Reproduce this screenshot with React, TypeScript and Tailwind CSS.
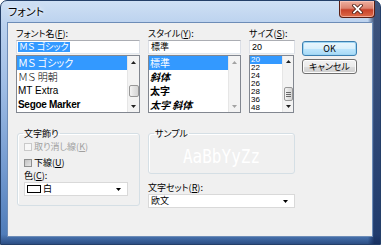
import React from "react";

const jp = "font-['Noto_Sans_CJK_JP',sans-serif] [font-feature-settings:'palt']";

function Tri({ up, color = "#000" }: { up?: boolean; color?: string }) {
  return (
    <svg width="5" height="3" viewBox="0 0 5 3">
      <path d={up ? "M0 3H5L2.5 0Z" : "M0 0H5L2.5 3Z"} fill={color} />
    </svg>
  );
}

interface ScrollProps {
  widthClass: string;
  thumbClass?: string;
  grip?: boolean;
  dim?: boolean;
}

function ScrollBar({ widthClass, thumbClass, grip, dim }: ScrollProps) {
  const arrow = dim ? "#a3a3a3" : "#202020";
  return (
    <div className={`${widthClass} h-full flex flex-col bg-[#f3f3f3] border-l border-[#e6e6e6]`}>
      <div className="h-[12px] flex items-center justify-center">
        <Tri up color={arrow} />
      </div>
      <div className="flex-1 flex flex-col items-center">
        {thumbClass && (
          <div className={`${thumbClass} w-[calc(100%-1px)] rounded-[2px] border border-[#979797] bg-[linear-gradient(90deg,#f4f4f4,#e2e2e2_50%,#d6d6d6)] flex flex-col items-center justify-center gap-[1px]`}>
            {grip && (
              <>
                <div className="w-[5px] h-px bg-[#6a6a6a]" />
                <div className="w-[5px] h-px bg-[#6a6a6a]" />
                <div className="w-[5px] h-px bg-[#6a6a6a]" />
              </>
            )}
          </div>
        )}
      </div>
      <div className="h-[12px] flex items-center justify-center">
        <Tri color={arrow} />
      </div>
    </div>
  );
}

function Label({ text, k }: { text: string; k: string }) {
  return (
    <div className={`${jp} h-[13px] text-[9px] leading-[13px] text-black whitespace-nowrap`}>
      {text}(<u>{k}</u>):
    </div>
  );
}

function TextBox({ children }: { children: React.ReactNode }) {
  return (
    <div className="h-[14px] bg-white border border-[#abadb3] border-b-[#e3e9ef] border-x-[#dbdfe6] flex items-center pl-[1px]">
      {children}
    </div>
  );
}

function Dropdown({ children, widthClass }: { children: React.ReactNode; widthClass: string }) {
  return (
    <div className={`${widthClass} h-[14px] bg-white border border-[#d9d9d9] flex items-center pl-[2px] pr-[6px]`}>
      <div className="flex-1 flex items-center gap-[2px]">{children}</div>
      <Tri />
    </div>
  );
}

function CheckBox({ label, k, disabled }: { label: string; k: string; disabled?: boolean }) {
  return (
    <div className="h-[12px] flex items-center gap-[2px]">
      <div
        className={`w-[8px] h-[8px] border ${
          disabled ? "border-[#c9c9c9] bg-[#f7f7f7]" : "border-[#8e8f8f] bg-[linear-gradient(135deg,#c2c2c2,#e6e6e6)]"
        }`}
      />
      <span className={`${jp} text-[9px] leading-[12px] ${disabled ? "text-[#a0a0a0]" : "text-black"}`}>
        {label}(<u>{k}</u>)
      </span>
    </div>
  );
}

function WinButton({ children, primary }: { children: React.ReactNode; primary?: boolean }) {
  return (
    <div
      className={`${jp} h-[15px] rounded-[3px] border flex items-center justify-center text-[9px] text-black ${
        primary
          ? "border-[#3c7fb1] bg-[linear-gradient(180deg,#eaf6fd_0%,#d9f0fc_50%,#bee6fd_51%,#a7d9f5_100%)] shadow-[inset_0_0_0_1px_#9fd6f3]"
          : "border-[#707070] bg-[linear-gradient(180deg,#f2f2f2_0%,#ebebeb_50%,#dddddd_51%,#cfcfcf_100%)] shadow-[inset_0_0_0_1px_#fcfcfc]"
      }`}
    >
      {children}
    </div>
  );
}

export default function App() {
  return (
    <div className="w-[381px] h-[245px] bg-white">
      <div className="w-full h-full rounded-t-[7px] border border-[#243f68] flex flex-col bg-[linear-gradient(90deg,rgba(12,32,72,0)_0%,rgba(12,32,72,0)_96.8%,rgba(16,38,84,0.75)_98.5%),linear-gradient(180deg,rgba(12,32,72,0)_0%,rgba(12,32,72,0)_96%,rgba(16,38,84,0.5)_100%),linear-gradient(180deg,#cfe0f4_0%,#bad1ee_10%,#9fbde5_35%,#7299cf_70%,#4a78b6_100%)]">
        {/* title bar */}
        <div className="h-[21px] flex items-start">
          <div className={`${jp} pl-[7px] pt-[3px] text-[11px] leading-[14px] text-black [text-shadow:0_0_6px_#fff,0_0_3px_#fff]`}>
            フォント
          </div>
          <div className="ml-auto mr-[5px] w-[36px] h-[17px] rounded-b-[4px] border border-t-0 border-[#5a1f14] bg-[linear-gradient(180deg,#eeb0a0_0%,#dc8470_45%,#c8432b_55%,#dd6a48_100%)] shadow-[inset_0_0_0_1px_rgba(255,210,200,0.6)] flex items-center justify-center">
            <svg width="11" height="10" viewBox="0 0 11 10">
              <path d="M2 1.5L9 8.5M9 1.5L2 8.5" stroke="#4a1a12" strokeWidth="3.4" strokeLinecap="square" />
              <path d="M2 1.5L9 8.5M9 1.5L2 8.5" stroke="#fff" strokeWidth="1.8" strokeLinecap="square" />
            </svg>
          </div>
        </div>

        {/* client area */}
        <div className="ml-[6px] w-[366px] h-[215px] border border-[#6d8cb7] bg-[#f0f0f0] flex flex-col">
          {/* top row */}
          <div className="flex pt-[4px] pl-[8px]">
            <div className="w-[124px] flex flex-col">
              <Label text="フォント名" k="F" />
              <TextBox>
                <span className={`${jp} text-[9px] leading-[10px] bg-[#3399ff] text-white px-[1px]`}>ＭＳ ゴシック</span>
              </TextBox>
              <div className="mt-[1px] h-[58px] border border-[#828790] bg-white flex">
                <div className="flex-1 flex flex-col">
                  <div className={`${jp} h-[14px] bg-[#3399ff] text-white text-[10px] leading-[14px] pl-[1px]`}>ＭＳ ゴシック</div>
                  <div className={`${jp} h-[14px] text-black text-[10px] leading-[14px] pl-[1px] font-light`}>ＭＳ 明朝</div>
                  <div className="h-[14px] text-black text-[10px] leading-[14px] pl-[1px] font-['Liberation_Sans',sans-serif]">MT Extra</div>
                  <div className="h-[14px] text-black text-[10px] leading-[14px] pl-[1px] font-bold tracking-[-0.3px] font-['Liberation_Sans',sans-serif]">Segoe Marker</div>
                </div>
                <ScrollBar widthClass="w-[12px]" thumbClass="mt-[17px] h-[12px]" />
              </div>
            </div>

            <div className="ml-[8px] w-[93px] flex flex-col">
              <Label text="スタイル" k="Y" />
              <TextBox>
                <span className={`${jp} text-[9px] leading-[10px] text-black pl-[1px]`}>標準</span>
              </TextBox>
              <div className="mt-[1px] h-[58px] border border-[#828790] bg-white flex">
                <div className={`${jp} flex-1 flex flex-col text-[10px] leading-[14px] text-black`}>
                  <div className="h-[14px] bg-[#3399ff] text-white pl-[1px]">標準</div>
                  <div className="h-[14px] pl-[1px] italic font-bold">斜体</div>
                  <div className="h-[14px] pl-[1px] font-bold">太字</div>
                  <div className="h-[14px] pl-[1px] italic font-bold">太字 斜体</div>
                </div>
                <ScrollBar widthClass="w-[12px]" dim />
              </div>
            </div>

            <div className="ml-[8px] w-[46px] flex flex-col">
              <Label text="サイズ" k="S" />
              <TextBox>
                <span className="font-['Liberation_Sans',sans-serif] text-[9px] leading-[10px] text-black pl-[1px]">20</span>
              </TextBox>
              <div className="mt-[1px] w-[45px] h-[58px] border border-[#828790] bg-white flex">
                <div className="flex-1 flex flex-col font-['Liberation_Sans',sans-serif] text-[8px] leading-[8px] text-black">
                  <div className="h-[8px] bg-[#3399ff] text-white pl-[1px]">20</div>
                  <div className="h-[8px] pl-[1px]">22</div>
                  <div className="h-[8px] pl-[1px]">24</div>
                  <div className="h-[8px] pl-[1px]">26</div>
                  <div className="h-[8px] pl-[1px]">28</div>
                  <div className="h-[8px] pl-[1px]">36</div>
                  <div className="h-[8px] pl-[1px]">48</div>
                </div>
                <ScrollBar widthClass="w-[11px]" thumbClass="mt-[20px] h-[14px]" grip />
              </div>
            </div>

            <div className="ml-[7px] w-[55px] mt-[14px] flex flex-col gap-[3px]">
              <WinButton primary>OK</WinButton>
              <WinButton>キャンセル</WinButton>
            </div>
          </div>

          {/* bottom row */}
          <div className="flex mt-[14px] pl-[9px]">
            <fieldset className="w-[123px] h-[79px] border border-[#d5dfe5] rounded-[3px] shadow-[inset_1px_1px_0_#fff] flex flex-col pl-[6px]">
              <legend className={`${jp} ml-[-1px] px-[1px] text-[9px] leading-[13px] text-black`}>文字飾り</legend>
              <div className="mt-[1px] flex flex-col gap-[4px]">
                <CheckBox label="取り消し線" k="K" disabled />
                <CheckBox label="下線" k="U" />
              </div>
              <div className={`${jp} mt-[1px] h-[12px] text-[9px] leading-[12px] text-black`}>
                色(<u>C</u>):
              </div>
              <Dropdown widthClass="w-[104px]">
                <div className="w-[14px] h-[8px] border border-black bg-white" />
                <span className={`${jp} text-[9px] leading-[12px] text-black`}>白</span>
              </Dropdown>
            </fieldset>

            <div className="ml-[8px] w-[147px] flex flex-col">
              <fieldset className="h-[47px] border border-[#d5dfe5] rounded-[3px] shadow-[inset_1px_1px_0_#fff] flex items-center justify-center">
                <legend className={`${jp} ml-[5px] px-[1px] text-[9px] leading-[13px] text-black`}>サンプル</legend>
                <span className="mt-[8px] font-['DejaVu_Sans_Mono',monospace] text-[16px] leading-[18px] text-white scale-y-[1.2]">
                  AaBbYyZz
                </span>
              </fieldset>
              <div className={`${jp} mt-[7px] h-[13px] text-[9px] leading-[13px] text-black`}>
                文字セット(<u>R</u>):
              </div>
              <Dropdown widthClass="w-[147px]">
                <span className={`${jp} text-[9px] leading-[12px] text-black`}>欧文</span>
              </Dropdown>
            </div>
          </div>
        </div>
      </div>
    </div>
  );
}
